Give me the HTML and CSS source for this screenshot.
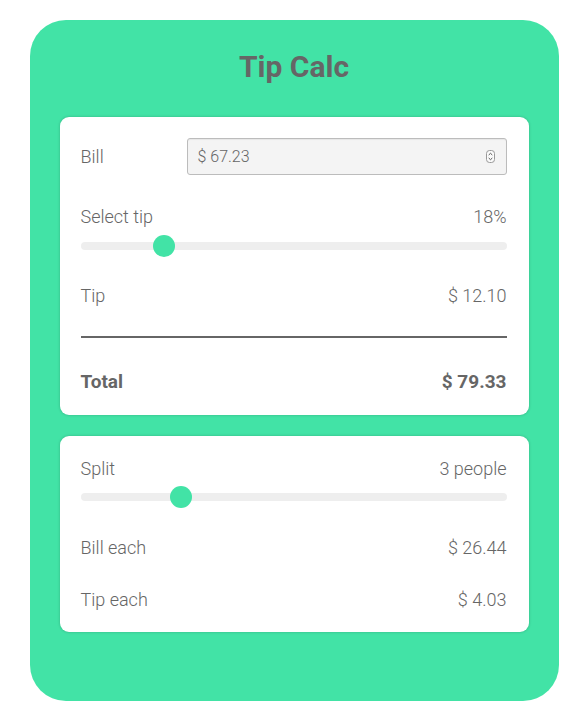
FILE: index.html
```html
<!DOCTYPE html>
<html>
<head>
<meta charset="utf-8">
<link rel="stylesheet" href="styles.css">
</head>
<body>
<div class="app">
  <h1 class="title">Tip Calc</h1>
  <div class="card card-main">
    <div class="row row-bill">
      <span class="label">Bill</span>
      <div class="bill-input">
        <span class="bill-value">$ 67.23</span>
        <svg class="spinner" width="9" height="13" viewBox="0 0 9 13">
          <rect x="0.5" y="0.5" width="8" height="12" rx="3" fill="#fafafa" stroke="#999"/>
          <path d="M2.7 5 L4.5 3.3 L6.3 5" fill="none" stroke="#555" stroke-width="1"/>
          <path d="M2.7 8 L4.5 9.7 L6.3 8" fill="none" stroke="#555" stroke-width="1"/>
        </svg>
      </div>
    </div>
    <div class="row row-select">
      <span class="label">Select tip</span>
      <span class="value">18%</span>
    </div>
    <div class="slider">
      <div class="track"></div>
      <div class="thumb" style="left: calc((100% - 22px) * 0.18)"></div>
    </div>
    <div class="row row-tip">
      <span class="label">Tip</span>
      <span class="value">$ 12.10</span>
    </div>
    <div class="divider"></div>
    <div class="row row-total">
      <span class="label">Total</span>
      <span class="value">$ 79.33</span>
    </div>
  </div>
  <div class="card card-split">
    <div class="row row-split">
      <span class="label">Split</span>
      <span class="value">3 people</span>
    </div>
    <div class="slider">
      <div class="track"></div>
      <div class="thumb" style="left: calc((100% - 22px) * 0.2222)"></div>
    </div>
    <div class="row row-each">
      <span class="label">Bill each</span>
      <span class="value">$ 26.44</span>
    </div>
    <div class="row row-each2">
      <span class="label">Tip each</span>
      <span class="value">$ 4.03</span>
    </div>
  </div>
</div>
</body>
</html>
```

FILE: styles.css
```css
* { box-sizing: border-box; }
html, body { margin: 0; padding: 0; background: #fff; }
body {
  font-family: Roboto, "Liberation Sans", sans-serif;
  color: #666;
}
.app {
  width: 529px;
  margin: 20px auto 0;
  background: #42e3a6;
  border-radius: 36px;
  padding: 29px 30px 69px;
}
.title {
  margin: 0 0 32px;
  height: 36px;
  line-height: 36px;
  font-size: 30px;
  font-weight: 700;
  text-align: center;
  color: #666;
}
.card {
  background: #fff;
  border-radius: 9px;
  box-shadow: 0 0 3px rgba(0, 0, 0, 0.22);
  padding: 21px 22px 22px 21px;
}
.card-main { padding-bottom: 23px; }
.card-split { margin-top: 21px; }
.row {
  display: flex;
  justify-content: space-between;
  align-items: center;
  height: 22px;
  font-size: 18px;
  font-weight: 300;
}
.row-bill { height: 37px; }
.row-select { margin-top: 30px; }
.row-tip { margin-top: 27px; }
.row-total { margin-top: 32px; font-weight: 700; font-size: 19px; }
.row-each { margin-top: 28px; }
.row-each2 { margin-top: 30px; }
.bill-input {
  width: 320px;
  height: 37px;
  background: #f4f4f4;
  border: 1px solid #bcbcbc;
  border-radius: 3px;
  display: flex;
  align-items: center;
  justify-content: space-between;
  padding: 0 11px 0 10px;
  box-shadow: inset 0 1px 1px rgba(0,0,0,0.06);
}
.bill-value { font-size: 16px; font-weight: 300; color: #666; }
.spinner { display: block; }
.slider {
  position: relative;
  height: 22px;
  margin-top: 8px;
  display: flex;
  align-items: center;
}
.card-split .slider { margin-top: 7px; }
.track {
  width: 100%;
  height: 8px;
  border-radius: 4px;
  background: #eeeeee;
}
.thumb {
  position: absolute;
  top: 0;
  width: 22px;
  height: 22px;
  border-radius: 50%;
  background: #42e3a6;
}
.divider {
  margin-top: 30px;
  height: 2px;
  background: #666;
}
```
